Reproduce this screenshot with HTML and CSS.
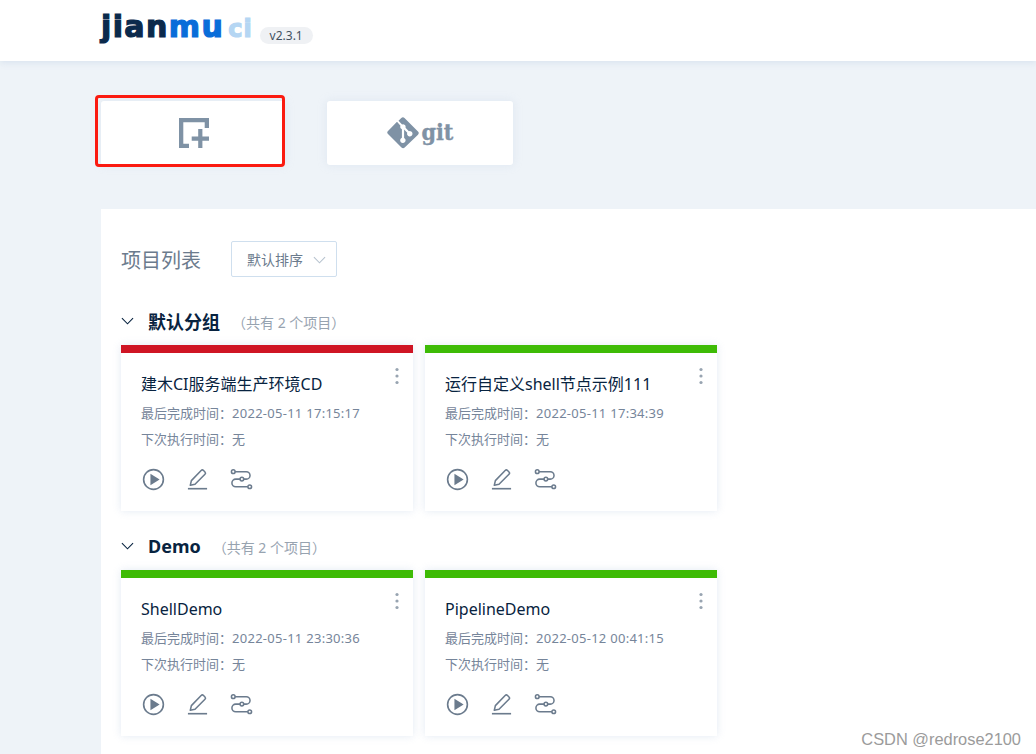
FILE: index.html
```html
<!DOCTYPE html>
<html lang="zh-CN">
<head>
<meta charset="utf-8">
<title>jianmu ci</title>
<link rel="stylesheet" href="styles.css">
</head>
<body>
<svg class="defs" width="0" height="0" aria-hidden="true">
  <symbol id="i-play" viewBox="0 0 24 24">
    <circle cx="12" cy="12" r="10.3" fill="none" stroke="currentColor" stroke-width="1.7"/>
    <path d="M8.8 6 18.400 12l-9.600 6z" fill="currentColor"/>
  </symbol>
  <symbol id="i-edit" viewBox="0 0 24 24">
    <path d="M4.500 18 5.600 13.200 15.800 2.600a1.800 1.800 0 0 1 2.500 0l1.500 1.500a1.800 1.800 0 0 1 0 2.500L9.400 17z" fill="none" stroke="currentColor" stroke-width="1.6" stroke-linejoin="round"/>
    <path d="M2 21.600h20" stroke="currentColor" stroke-width="1.700" fill="none"/>
  </symbol>
  <symbol id="i-flow" viewBox="0 0 24 24">
    <g fill="none" stroke="currentColor" stroke-width="1.600">
      <circle cx="3.400" cy="3.800" r="1.900"/>
      <circle cx="12.400" cy="11.600" r="1.900"/>
      <circle cx="20.600" cy="19.600" r="1.900"/>
      <path d="M5.300 3.800H17a3.900 3.900 0 0 1 0 7.800h-2.700"/>
      <path d="M10.500 11.600H6a4 4 0 0 0 0 8h12.700"/>
    </g>
  </symbol>
  <symbol id="i-more" viewBox="0 0 6 18">
    <circle cx="3" cy="2.500" r="1.600" fill="currentColor"/>
    <circle cx="3" cy="9" r="1.600" fill="currentColor"/>
    <circle cx="3" cy="15.500" r="1.600" fill="currentColor"/>
  </symbol>
  <symbol id="i-chev" viewBox="0 0 14 8">
    <path d="M1 1l6 6 6-6" fill="none" stroke="currentColor" stroke-width="1.200"/>
  </symbol>
</svg>

<header class="topbar">
  <div class="logo"><span class="logo-a">jian</span><span class="logo-b">mu</span><span class="logo-c">ci</span></div>
  <span class="version">v2.3.1</span>
</header>

<main class="page">
  <div class="entries">
    <a class="entry entry-first">
      <svg class="entry-new" viewBox="0 0 30 30" aria-hidden="true">
        <path d="M0 0h30v10h-4.300V4.300H4.300v21.400H10V30H0z" fill="currentColor"/>
        <path d="M12.700 18.600h6.500V11h4.200v7.600H30v4.200h-6.600V30h-4.200v-7.200h-6.500z" fill="currentColor"/>
      </svg>
    </a>
    <a class="entry entry-second">
      <svg class="entry-git" viewBox="0 0 32 32" aria-hidden="true">
        <path d="M31 14.500 17.500 1a2.300 2.300 0 0 0-3.200 0l-2.800 2.800 3.600 3.600a2.700 2.700 0 0 1 3.400 3.400l3.400 3.400a2.700 2.700 0 1 1-1.600 1.500l-3.200-3.200v8.400a2.700 2.700 0 1 1-2.200-.1v-8.500a2.700 2.700 0 0 1-1.400-3.500L10 4.800 1 13.900a2.300 2.300 0 0 0 0 3.200L14.500 30.600a2.300 2.300 0 0 0 3.200 0L31 17.700a2.300 2.300 0 0 0 0-3.200z" fill="currentColor"/>
      </svg>
      <span class="git-word">git</span>
    </a>
    <span class="annotation"></span>
  </div>

  <section class="panel">
    <div class="panel-head">
      <h1 class="panel-title">项目列表</h1>
      <div class="sort">
        <span>默认排序</span>
        <svg class="sort-chev"><use href="#i-chev"/></svg>
      </div>
    </div>

    <div class="group">
      <div class="group-head">
        <svg class="group-chev"><use href="#i-chev"/></svg>
        <h2 class="group-name">默认分组</h2>
        <span class="group-count">（共有 2 个项目）</span>
      </div>
      <div class="cards">
        <article class="card card-failed">
          <svg class="more"><use href="#i-more"/></svg>
          <div class="card-title">建木CI服务端生产环境CD</div>
          <div class="meta">最后完成时间：<span class="date">2022-05-11 17:15:17</span></div>
          <div class="meta">下次执行时间：无</div>
          <div class="ops">
            <svg class="op"><use href="#i-play"/></svg>
            <svg class="op"><use href="#i-edit"/></svg>
            <svg class="op"><use href="#i-flow"/></svg>
          </div>
        </article>
        <article class="card card-ok">
          <svg class="more"><use href="#i-more"/></svg>
          <div class="card-title">运行自定义shell节点示例111</div>
          <div class="meta">最后完成时间：<span class="date">2022-05-11 17:34:39</span></div>
          <div class="meta">下次执行时间：无</div>
          <div class="ops">
            <svg class="op"><use href="#i-play"/></svg>
            <svg class="op"><use href="#i-edit"/></svg>
            <svg class="op"><use href="#i-flow"/></svg>
          </div>
        </article>
      </div>
    </div>

    <div class="group">
      <div class="group-head">
        <svg class="group-chev"><use href="#i-chev"/></svg>
        <h2 class="group-name">Demo</h2>
        <span class="group-count">（共有 2 个项目）</span>
      </div>
      <div class="cards">
        <article class="card card-ok">
          <svg class="more"><use href="#i-more"/></svg>
          <div class="card-title">ShellDemo</div>
          <div class="meta">最后完成时间：<span class="date">2022-05-11 23:30:36</span></div>
          <div class="meta">下次执行时间：无</div>
          <div class="ops">
            <svg class="op"><use href="#i-play"/></svg>
            <svg class="op"><use href="#i-edit"/></svg>
            <svg class="op"><use href="#i-flow"/></svg>
          </div>
        </article>
        <article class="card card-ok">
          <svg class="more"><use href="#i-more"/></svg>
          <div class="card-title">PipelineDemo</div>
          <div class="meta">最后完成时间：<span class="date">2022-05-12 00:41:15</span></div>
          <div class="meta">下次执行时间：无</div>
          <div class="ops">
            <svg class="op"><use href="#i-play"/></svg>
            <svg class="op"><use href="#i-edit"/></svg>
            <svg class="op"><use href="#i-flow"/></svg>
          </div>
        </article>
      </div>
    </div>
  </section>
</main>
<div class="watermark">CSDN @redrose2100</div>
</body>
</html>
```
FILE: styles.css
```css
* { box-sizing: border-box; }
html, body { margin: 0; height: 100%; overflow: hidden; }
body {
  background: #eef3f8;
  font-family: "Noto Sans", "Noto Sans CJK SC", sans-serif;
  color: #082340;
  position: relative;
}
.defs { position: absolute; }

.topbar {
  height: 61px;
  background: #fff;
  box-shadow: 0 2px 6px rgba(194, 208, 228, .45);
  padding-left: 101px;
  display: flex;
  align-items: flex-start;
}
.logo {
  font-family: "DejaVu Sans", sans-serif;
  font-weight: 700;
  font-size: 30px;
  line-height: 36px;
  margin-top: 9px;
  display: flex;
  align-items: baseline;
  letter-spacing: 1.4px;
  -webkit-text-stroke-width: 1.2px;
}
.logo-a { color: #0b2a4c; -webkit-text-stroke-color: #0b2a4c; }
.logo-b { color: #096dd9; -webkit-text-stroke-color: #096dd9; }
.logo-c { color: #b5d6f3; -webkit-text-stroke-color: #b5d6f3; font-size: 24px; margin-left: 4px; letter-spacing: 1px; }
.version {
  margin: 27px 0 0 7px;
  width: 53px;
  height: 17px;
  text-align: center;
  border-radius: 9px;
  background: #eff1f4;
  color: #42505f;
  font-size: 12px;
  line-height: 17px;
}

.page { padding: 40px 0 0 101px; }
.entries { display: flex; gap: 42px; position: relative; }
.entry {
  height: 64px;
  background: #fff;
  border-radius: 3px;
  box-shadow: 0 0 8px rgba(194, 208, 228, .35);
  display: flex;
  align-items: center;
  justify-content: center;
  color: #7f92a5;
}
.entry-first { width: 184px; padding-left: 2px; }
.entry-second { width: 186px; gap: 3px; }
.entry-new { width: 30px; height: 30px; }
.entry-git { width: 32px; height: 32px; }
.git-word {
  font-family: "DejaVu Serif Condensed", "DejaVu Serif", serif;
  font-weight: 700;
  font-size: 23px;
  line-height: 32px;
  margin-top: -3px;
  -webkit-text-stroke: .4px #7f92a5;
}
.annotation {
  position: absolute;
  left: -6px;
  top: -6px;
  width: 190px;
  height: 72px;
  border: 3px solid #fb1a10;
  border-radius: 4px;
}

.panel {
  margin-top: 44px;
  background: #fff;
  padding: 32px 20px 0;
  height: 560px;
}
.panel-head { display: flex; align-items: center; height: 36px; gap: 30px; }
.panel-title {
  margin: 0;
  font-size: 20px;
  font-weight: 400;
  color: #6b7b8d;
}
.sort {
  width: 106px;
  height: 36px;
  border: 1px solid #cfdfee;
  border-radius: 2px;
  display: flex;
  align-items: center;
  padding: 0 10px 0 15px;
  justify-content: space-between;
  font-size: 14px;
  color: #6b7b8d;
}
.sort-chev { width: 13px; height: 8px; color: #b7c3cf; margin-top: 2px; }

.group { margin-top: 29px; }
.group + .group { margin-top: 20px; }
.group-head { display: flex; align-items: center; height: 30px; margin-bottom: 9px; }
.group-chev { width: 13px; height: 8px; color: #082340; }
.group-name {
  margin: 0 0 0 14px;
  font-size: 18px;
  font-weight: 700;
  color: #082340;
}
.group-count { margin-left: 12px; font-size: 14px; color: #97a3b0; margin-top: 2px; }

.cards { display: flex; gap: 12px; }
.card {
  width: 292px;
  height: 166px;
  background: #fff;
  box-shadow: 0 0 8px rgba(194, 208, 228, .45);
  border-top: 8px solid #3ebb06;
  padding: 19px 20px 0;
  position: relative;
}
.card-failed { border-top-color: #cf1524; }
.card-ok { border-top-color: #3ebb06; }
.more {
  position: absolute;
  right: 13px;
  top: 14px;
  width: 6px;
  height: 18px;
  color: #98a4b1;
}
.card-title { font-size: 16px; line-height: 24px; color: #082340; }
.meta { font-size: 13px; line-height: 18px; color: #76859a; margin-top: 8px; }
.date { letter-spacing: .27px; }
.ops { display: flex; gap: 21px; padding-left: 1px; margin-top: 20px; color: #6b7b8d; }
.op { width: 23px; height: 23px; }

.watermark {
  position: absolute;
  right: 15px;
  top: 729px;
  font-family: "Liberation Sans", sans-serif;
  font-size: 16.400px;
  line-height: 20px;
  color: #9b9b9b;
}
```
